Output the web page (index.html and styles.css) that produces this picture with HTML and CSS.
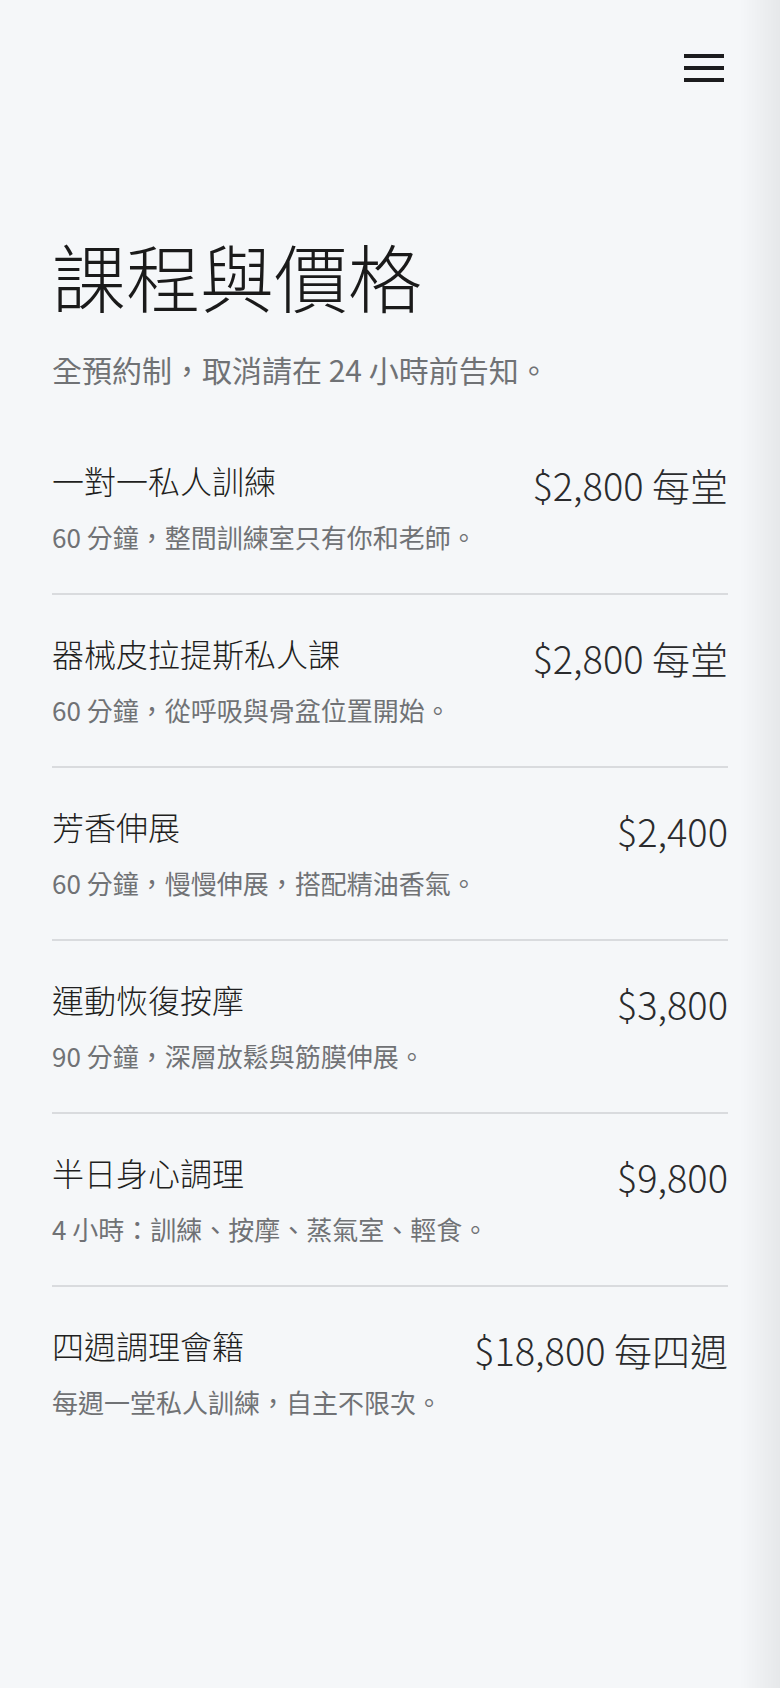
FILE: index.html
```html
<!DOCTYPE html>
<html lang="zh-Hant">
<head>
<meta charset="utf-8">
<meta name="viewport" content="width=device-width, initial-scale=1">
<title>課程與價格</title>
<link rel="stylesheet" href="styles.css">
</head>
<body>
<div class="page">
  <header class="topbar">
    <button class="menu-btn" aria-label="選單">
      <span class="bar"></span>
      <span class="bar"></span>
      <span class="bar"></span>
    </button>
  </header>
  <main class="content">
    <h1 class="title">課程與價格</h1>
    <p class="lead">全預約制，取消請在 24 小時前告知。</p>
    <ul class="price-list">
      <li class="item">
        <div class="info">
          <h2 class="name">一對一私人訓練</h2>
          <p class="desc">60 分鐘，整間訓練室只有你和老師。</p>
        </div>
        <div class="price">$2,800 每堂</div>
      </li>
      <li class="item">
        <div class="info">
          <h2 class="name">器械皮拉提斯私人課</h2>
          <p class="desc">60 分鐘，從呼吸與骨盆位置開始。</p>
        </div>
        <div class="price">$2,800 每堂</div>
      </li>
      <li class="item">
        <div class="info">
          <h2 class="name">芳香伸展</h2>
          <p class="desc">60 分鐘，慢慢伸展，搭配精油香氣。</p>
        </div>
        <div class="price">$2,400</div>
      </li>
      <li class="item">
        <div class="info">
          <h2 class="name">運動恢復按摩</h2>
          <p class="desc">90 分鐘，深層放鬆與筋膜伸展。</p>
        </div>
        <div class="price">$3,800</div>
      </li>
      <li class="item">
        <div class="info">
          <h2 class="name">半日身心調理</h2>
          <p class="desc">4 小時：訓練、按摩、蒸氣室、輕食。</p>
        </div>
        <div class="price">$9,800</div>
      </li>
      <li class="item">
        <div class="info">
          <h2 class="name">四週調理會籍</h2>
          <p class="desc">每週一堂私人訓練，自主不限次。</p>
        </div>
        <div class="price">$18,800 每四週</div>
      </li>
    </ul>
  </main>
  <div class="edge-shadow" aria-hidden="true"></div>
</div>
</body>
</html>
```

FILE: styles.css
```css
* {
  box-sizing: border-box;
}

html, body {
  margin: 0;
  padding: 0;
}

body {
  background: #f5f7f9;
  font-family: "Noto Sans CJK TC", "Noto Sans", "Liberation Sans", sans-serif;
  color: #1c1c1e;
  min-height: 1688px;
}

.page {
  min-height: 1688px;
}

.topbar {
  display: flex;
  justify-content: flex-end;
  padding: 54px 56px 0 52px;
}

.menu-btn {
  display: flex;
  flex-direction: column;
  gap: 8px;
  width: 40px;
  padding: 0;
  margin: 0;
  border: 0;
  background: transparent;
  cursor: pointer;
}

.bar {
  display: block;
  width: 40px;
  height: 4px;
  background: #1c1c1e;
}

.content {
  padding: 0 52px;
  margin-top: 150px;
}

.title {
  margin: 0;
  font-size: 74px;
  line-height: 86px;
  font-weight: 300;
  color: #1a1a1a;
  letter-spacing: 0;
}

.lead {
  margin: 30px 0 0;
  font-size: 30px;
  line-height: 42px;
  font-weight: 400;
  color: #707275;
}

.price-list {
  list-style: none;
  margin: 32px 0 0;
  padding: 0;
}

.item {
  display: flex;
  justify-content: space-between;
  align-items: flex-start;
  gap: 24px;
  padding: 34px 0 38px;
  border-bottom: 2px solid #d9dbde;
}

.item:last-child {
  border-bottom: 0;
}

.info {
  min-width: 0;
}

.name {
  margin: 0;
  font-size: 32px;
  line-height: 48px;
  font-weight: 300;
  color: #1f1f21;
}

.desc {
  margin: 15px 0 0;
  font-size: 26px;
  line-height: 36px;
  font-weight: 400;
  color: #707275;
}

.price {
  flex-shrink: 0;
  font-size: 38px;
  line-height: 57px;
  font-weight: 300;
  color: #2a2b2d;
  white-space: nowrap;
}

.edge-shadow {
  position: fixed;
  top: 0;
  right: 0;
  width: 40px;
  height: 100%;
  pointer-events: none;
  background: linear-gradient(to right, rgba(0, 0, 0, 0) 0%, rgba(0, 0, 0, 0.025) 40%, rgba(0, 0, 0, 0.06) 100%);
}
```
